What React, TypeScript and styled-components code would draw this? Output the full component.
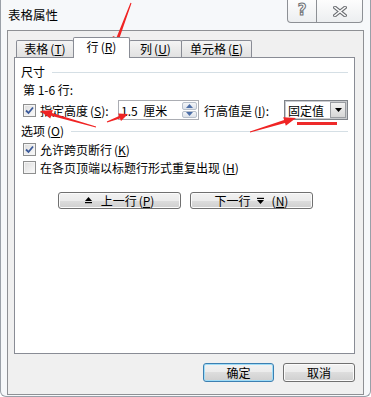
import React from 'react';
import styled, { createGlobalStyle } from 'styled-components';

const GlobalStyle = createGlobalStyle`
  html, body {
    margin: 0;
    padding: 0;
  }
  body {
    font-family: "Noto Sans CJK SC", "Liberation Sans", sans-serif;
    font-size: 12px;
    color: #000;
    background: #fff;
  }
`;

const Window = styled.div`
  position: relative;
  width: 371px;
  height: 397px;
  box-sizing: border-box;
  background: #f6f8fa;
  border: 1px solid #9aa0a8;
  border-top: none;
  border-radius: 0 0 6px 6px;
  display: flex;
  flex-direction: column;
  overflow: hidden;
`;

const TitleBar = styled.div`
  display: flex;
  align-items: center;
  height: 30px;
  flex-shrink: 0;
`;

const Title = styled.div`
  padding-left: 7px;
  font-size: 12.5px;
  line-height: 16px;
`;

const CaptionGroup = styled.div`
  display: flex;
  align-self: flex-start;
  margin-left: auto;
  margin-right: 7px;
`;

const CaptionButton = styled.div<{ $w: number; $first?: boolean }>`
  box-sizing: border-box;
  width: ${(p) => p.$w}px;
  height: 23px;
  border: 1px solid #8d9095;
  border-top: none;
  border-radius: ${(p) => (p.$first ? '0 0 0 4px' : '0 0 4px 0')};
  margin-left: ${(p) => (p.$first ? 0 : -1)}px;
  background: linear-gradient(#fdfdfd, #eceef0);
  display: flex;
  align-items: center;
  justify-content: center;
`;

const HelpGlyph = styled.span`
  font-family: "DejaVu Sans", sans-serif;
  font-weight: bold;
  font-size: 15px;
  line-height: 15px;
  color: #fdfdfd;
  -webkit-text-stroke: 1px #6e7175;
  margin-top: -2px;
`;

const Client = styled.div`
  flex: 1;
  margin: 0 6px 1px;
  border: 1px solid #8e9094;
  background: #f0f0f0;
  display: flex;
  flex-direction: column;
`;

const TabStrip = styled.div`
  position: relative;
  z-index: 1;
  display: flex;
  align-items: flex-end;
  height: 20px;
  margin-top: 6px;
  padding-left: 8px;
`;

const Tab = styled.div<{ $w: number; $active?: boolean }>`
  position: relative;
  z-index: ${(p) => (p.$active ? 2 : 1)};
  box-sizing: border-box;
  width: ${(p) => p.$w}px;
  height: ${(p) => (p.$active ? 21 : 17)}px;
  margin-bottom: ${(p) => (p.$active ? -1 : 0)}px;
  border: 1px solid #898c95;
  border-bottom: none;
  border-radius: 2px 2px 0 0;
  background: ${(p) => (p.$active ? '#fff' : 'linear-gradient(#f4f4f4, #e1e1e1)')};
  display: flex;
  align-items: center;
  justify-content: center;
  padding-bottom: ${(p) => (p.$active ? 2 : 0)}px;
  line-height: 14px;

  &:not(:first-child) {
    margin-left: -1px;
  }
`;

const Panel = styled.div`
  box-sizing: border-box;
  width: 341px;
  height: 297px;
  margin-left: 6px;
  border: 1px solid #898c95;
  background: #fff;
  padding: 6px 6px 0;
  display: flex;
  flex-direction: column;
`;

const GroupHeader = styled.div<{ $mt: number }>`
  display: flex;
  align-items: center;
  gap: 7px;
  height: 16px;
  line-height: 16px;
  margin-top: ${(p) => p.$mt}px;

  &::after {
    content: '';
    flex: 1;
    height: 1px;
    background: #d5dfe5;
  }
`;

const Line = styled.div<{ $mt: number; $h?: number }>`
  display: flex;
  align-items: center;
  height: ${(p) => p.$h ?? 16}px;
  margin-top: ${(p) => p.$mt}px;
  padding-left: 2px;
  white-space: nowrap;
`;

const CheckBox = styled.span`
  box-sizing: border-box;
  width: 13px;
  height: 13px;
  flex-shrink: 0;
  border: 1px solid #8e8f8f;
  background: linear-gradient(135deg, #dcdcdc, #fbfbfb);
  box-shadow: inset 0 0 0 1px #f4f4f4;
  display: flex;
  align-items: center;
  justify-content: center;
  margin-right: 4px;
`;

const FieldLabel = styled.span<{ $w: number }>`
  width: ${(p) => p.$w}px;
  flex-shrink: 0;
`;

const SpinBox = styled.div`
  box-sizing: border-box;
  width: 81px;
  height: 20px;
  border: 1px solid #abadb3;
  background: #fff;
  display: flex;
  align-items: stretch;
  margin-right: 5px;
`;

const FieldValue = styled.span`
  flex: 1;
  padding-left: 2px;
  display: flex;
  align-items: center;
  word-spacing: 3px;
`;

const SpinButtons = styled.div`
  width: 15px;
  margin: 1px;
  display: flex;
  flex-direction: column;
  gap: 1px;
`;

const SpinHalf = styled.div`
  flex: 1;
  box-sizing: border-box;
  border: 1px solid #b7bfca;
  border-radius: 2px;
  background: linear-gradient(#f3f5f8, #dde2e9);
  display: flex;
  align-items: center;
  justify-content: center;
`;

const Combo = styled.div`
  box-sizing: border-box;
  width: 64px;
  height: 20px;
  border: 1px solid #7f8389;
  box-shadow: inset 0 0 0 1px #c9cbce;
  background: #fff;
  display: flex;
  align-items: stretch;
`;

const ComboValue = styled.span`
  flex: 1;
  padding-left: 3px;
  display: flex;
  align-items: center;
`;

const DropButton = styled.div`
  box-sizing: border-box;
  width: 16px;
  margin: 1px;
  border: 1px solid #9a9da2;
  background: linear-gradient(#f2f2f2, #d6d6d6);
  display: flex;
  align-items: center;
  justify-content: center;
`;

const NavRow = styled.div`
  display: flex;
  justify-content: center;
  gap: 9px;
  margin-top: 17px;
  margin-left: 2px;
`;

const Button = styled.div<{ $w: number; $h: number; $default?: boolean }>`
  box-sizing: border-box;
  width: ${(p) => p.$w}px;
  height: ${(p) => p.$h}px;
  border: 1px solid ${(p) => (p.$default ? '#3c7fb1' : '#707070')};
  border-radius: 3px;
  background: linear-gradient(#f2f2f2 0%, #ebebeb 50%, #dddddd 50%, #cfcfcf 100%);
  box-shadow: ${(p) => (p.$default ? 'inset 0 0 0 1px #9fdcf7' : 'inset 0 0 0 1px #fbfbfb')};
  display: flex;
  align-items: center;
  justify-content: center;
  gap: 6px;
  line-height: 14px;
  white-space: nowrap;
`;

const Footer = styled.div`
  display: flex;
  justify-content: flex-end;
  gap: 9px;
  margin-top: 9px;
  padding-right: 8px;
`;

const Mnemonic = styled.span`
  margin-left: 2px;
`;

const Overlay = styled.svg`
  position: absolute;
  left: 0;
  top: 0;
  pointer-events: none;
`;

const Key: React.FC<{ k: string }> = ({ k }) => (
  <Mnemonic>
    (<u>{k}</u>)
  </Mnemonic>
);

const Check = () => (
  <svg width="9" height="9" viewBox="0 0 9 9">
    <path d="M1 4.5 L3.5 7 L8 1.5" fill="none" stroke="#3b5a9a" strokeWidth="1.8" />
  </svg>
);

const UpIcon = () => (
  <svg width="7" height="7" viewBox="0 0 7 7">
    <polygon points="3.5,0 7,4 0,4" fill="#000" />
    <rect x="0" y="5" width="7" height="1.2" fill="#000" />
  </svg>
);

const DownIcon = () => (
  <svg width="7" height="7" viewBox="0 0 7 7">
    <rect x="0" y="0.8" width="7" height="1.2" fill="#000" />
    <polygon points="0,3 7,3 3.5,7" fill="#000" />
  </svg>
);

interface Arrow {
  from: [number, number];
  to: [number, number];
  head: number;
  headW: number;
  shaftW: number;
}

// red annotation arrows drawn over the dialog
const arrows: Arrow[] = [
  { from: [130, 3], to: [112, 51], head: 14, headW: 11, shaftW: 3 },
  { from: [95, 127], to: [39, 111], head: 12, headW: 9, shaftW: 3 },
  { from: [106, 122], to: [127, 114], head: 9, headW: 8, shaftW: 2.5 },
  { from: [249, 132], to: [295, 118], head: 12, headW: 9, shaftW: 3 },
];

const arrowPoints = ({ from, to, head, headW, shaftW }: Arrow) => {
  const [x1, y1] = from;
  const [x2, y2] = to;
  const len = Math.hypot(x2 - x1, y2 - y1);
  const ux = (x2 - x1) / len;
  const uy = (y2 - y1) / len;
  const nx = -uy;
  const ny = ux;
  const bx = x2 - ux * head;
  const by = y2 - uy * head;
  const pts = [
    [x1 + nx * 0.5, y1 + ny * 0.5],
    [bx + (nx * shaftW) / 2, by + (ny * shaftW) / 2],
    [bx + (nx * headW) / 2, by + (ny * headW) / 2],
    [x2, y2],
    [bx - (nx * headW) / 2, by - (ny * headW) / 2],
    [bx - (nx * shaftW) / 2, by - (ny * shaftW) / 2],
    [x1 - nx * 0.5, y1 - ny * 0.5],
  ];
  return pts.map(([x, y]) => `${x.toFixed(1)},${y.toFixed(1)}`).join(' ');
};

const App: React.FC = () => (
  <>
    <GlobalStyle />
    <Window>
      <TitleBar>
        <Title>表格属性</Title>
        <CaptionGroup>
          <CaptionButton $w={30} $first>
            <HelpGlyph>?</HelpGlyph>
          </CaptionButton>
          <CaptionButton $w={47}>
            <svg width="14" height="11" viewBox="0 0 14 11">
              <path d="M2 1.5 L12 9.5 M12 1.5 L2 9.5" stroke="#6e7175" strokeWidth="3.6" strokeLinecap="square" />
              <path d="M2 1.5 L12 9.5 M12 1.5 L2 9.5" stroke="#fbfbfb" strokeWidth="1.6" strokeLinecap="square" />
            </svg>
          </CaptionButton>
        </CaptionGroup>
      </TitleBar>

      <Client>
        <TabStrip>
          <Tab $w={58}>
            表格<Key k="T" />
          </Tab>
          <Tab $w={57} $active>
            行<Key k="R" />
          </Tab>
          <Tab $w={53}>
            列<Key k="U" />
          </Tab>
          <Tab $w={71}>
            单元格<Key k="E" />
          </Tab>
        </TabStrip>

        <Panel>
          <GroupHeader $mt={0}>尺寸</GroupHeader>
          <Line $mt={1}>第 1-6 行:</Line>
          <Line $mt={3} $h={20}>
            <CheckBox>
              <Check />
            </CheckBox>
            <FieldLabel $w={78}>
              指定高度<Key k="S" />:
            </FieldLabel>
            <SpinBox>
              <FieldValue>1.5 厘米</FieldValue>
              <SpinButtons>
                <SpinHalf>
                  <svg width="7" height="4" viewBox="0 0 7 4">
                    <polygon points="3.5,0 7,4 0,4" fill="#4d6fa8" />
                  </svg>
                </SpinHalf>
                <SpinHalf>
                  <svg width="7" height="4" viewBox="0 0 7 4">
                    <polygon points="0,0 7,0 3.5,4" fill="#4d6fa8" />
                  </svg>
                </SpinHalf>
              </SpinButtons>
            </SpinBox>
            <FieldLabel $w={80}>
              行高值是<Key k="I" />:
            </FieldLabel>
            <Combo>
              <ComboValue>固定值</ComboValue>
              <DropButton>
                <svg width="7" height="4" viewBox="0 0 7 4">
                  <polygon points="0,0 7,0 3.5,4" fill="#000" />
                </svg>
              </DropButton>
            </Combo>
          </Line>

          <GroupHeader $mt={3}>
            <span>
              选项<Key k="O" />
            </span>
          </GroupHeader>
          <Line $mt={2}>
            <CheckBox>
              <Check />
            </CheckBox>
            允许跨页断行<Key k="K" />
          </Line>
          <Line $mt={2}>
            <CheckBox />
            在各页顶端以标题行形式重复出现<Key k="H" />
          </Line>

          <NavRow>
            <Button $w={123} $h={17}>
              <UpIcon />
              <span style={{ marginLeft: 3 }}>
                上一行<Key k="P" />
              </span>
            </Button>
            <Button $w={123} $h={17}>
              下一行
              <DownIcon />
              <Key k="N" />
            </Button>
          </NavRow>
        </Panel>

        <Footer>
          <Button $w={71} $h={19} $default>
            确定
          </Button>
          <Button $w={72} $h={19}>
            取消
          </Button>
        </Footer>
      </Client>

      <Overlay width="371" height="397" viewBox="0 0 371 397">
        {arrows.map((a, i) => (
          <polygon key={i} points={arrowPoints(a)} fill="#f02424" />
        ))}
        <rect x="296" y="122" width="40" height="3" fill="#ee2a2a" />
      </Overlay>
    </Window>
  </>
);

export default App;
